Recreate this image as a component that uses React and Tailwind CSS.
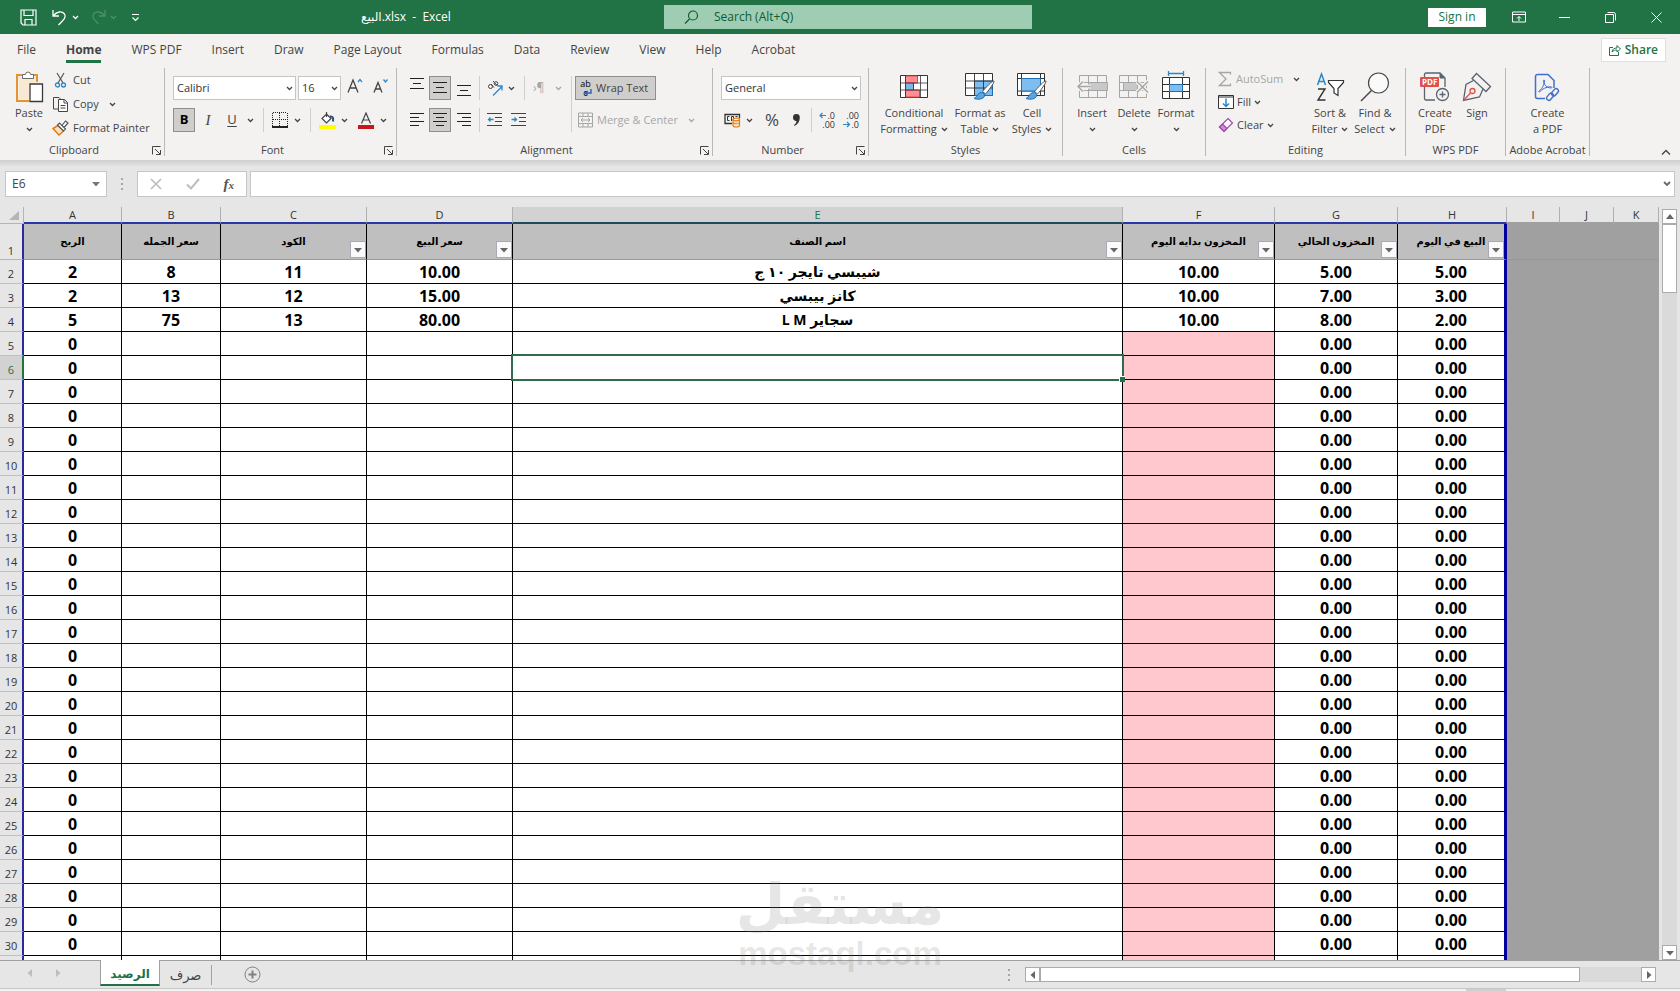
import React from 'react';
import { clsx } from 'clsx';

const COLUMNS = [
  { id: 'A', title: 'الربح', width: 'w-[98px]' },
  { id: 'B', title: 'سعر الجمله', width: 'w-[99px]' },
  { id: 'C', title: 'الكود', width: 'w-[146px]', filter: true },
  { id: 'D', title: 'سعر البيع', width: 'w-[146px]', filter: true },
  { id: 'E', title: 'اسم الصنف', width: '', filter: true },
  { id: 'F', title: 'المخزون بدايه اليوم', width: 'w-[152px]', filter: true },
  { id: 'G', title: 'المخزون الحالي', width: 'w-[123px]', filter: true },
  { id: 'H', title: 'البيع في اليوم', width: 'w-[109px]', filter: true },
];

const EMPTY_COLUMNS = [
  { id: 'I', width: 'w-[53px]' },
  { id: 'J', width: 'w-[54px]' },
  { id: 'K', width: 'w-[45px]' },
];

const ITEMS = [
  ['2', '8', '11', '10.00', 'شيبسي تايجر ١٠ ج', '10.00', '5.00', '5.00'],
  ['2', '13', '12', '15.00', 'كانز بيبسي', '10.00', '7.00', '3.00'],
  ['5', '75', '13', '80.00', 'سجاير L M', '10.00', '8.00', '2.00'],
];

const BLANK = ['0', '', '', '', '', '', '0.00', '0.00'];
const ROWS = Array.from({ length: 29 }, (_, i) => ITEMS[i] || BLANK);

const TABS = ['File', 'Home', 'WPS PDF', 'Insert', 'Draw', 'Page Layout', 'Formulas', 'Data', 'Review', 'View', 'Help', 'Acrobat'];

const Svg = ({ w = 16, h = 16, className, children }) => (
  <svg
    width={w}
    height={h}
    viewBox={`0 0 ${w} ${h}`}
    fill="none"
    stroke="currentColor"
    className={clsx('shrink-0', className)}
    aria-hidden="true"
  >
    {children}
  </svg>
);

const Chevron = ({ className }) => (
  <Svg w={7} h={5} className={className}>
    <path d="M1 1l2.500 2.500L6 1" strokeWidth="1.3" />
  </Svg>
);

const Triangle = ({ dir, className }) => {
  const paths = {
    up: 'M0 6l4-5 4 5z',
    down: 'M0 2l4 4.500 4-4.500z',
    left: 'M6 0v8L1.500 4z',
    right: 'M2 0v8l4.500-4z',
  };
  return (
    <Svg w={8} h={8} className={className}>
      <path d={paths[dir]} fill="currentColor" stroke="none" />
    </Svg>
  );
};

const Sep = ({ className }) => <span className={clsx('w-px shrink-0 bg-[#d0cfce]', className)} />;

/* ---------- Ribbon icons ---------- */

const PasteIcon = () => (
  <Svg w={29} h={32}>
    <path d="M7 4H2v26h12M18 4h4v7" stroke="#e8912d" strokeWidth="2" />
    <path d="M4 6h16v6h-6v16H4z" fill="#fbe3c0" stroke="none" opacity=".6" />
    <path d="M7.500 7.500v-4h3a2.500 2.500 0 015 0h3v4z" fill="#fff" stroke="#6b6b6b" />
    <path d="M15 13h12.500v17.500H15z" fill="#fff" stroke="#3a3a3a" strokeWidth="1.3" />
  </Svg>
);

const CutIcon = () => (
  <Svg w={14} h={16}>
    <path d="M3 1l6 10M10 1L4 11" stroke="#555" strokeWidth="1.2" />
    <circle cx="3.500" cy="13" r="2" stroke="#2b88c8" strokeWidth="1.3" />
    <circle cx="9.500" cy="13" r="2" stroke="#2b88c8" strokeWidth="1.3" />
  </Svg>
);

const CopyIcon = () => (
  <Svg w={17} h={16}>
    <path d="M6 13H1.500V1.500H7l2 2" />
    <path d="M6.500 3.500h6l3 3v9h-9z" fill="#fff" />
    <path d="M12 3.500V7h3.500M8.500 9.500h5M8.500 12h5" />
  </Svg>
);

const PainterIcon = () => (
  <Svg w={17} h={16}>
    <path d="M6 5.500L1 8.500 7 15l4.500-4z" fill="#fbe3c0" stroke="#e07b1a" strokeWidth="1.5" />
    <path d="M5.500 5l6 6 2-2-6-6zM10 5.500l3.500-4.500 2.500 2-4 4.500" fill="#fff" stroke="#555" strokeWidth="1.2" />
  </Svg>
);

const BordersIcon = () => (
  <Svg w={16} h={16}>
    <path d="M1 .5h14M1 7.500h14M.5 1v13M7.500 1v13M15.500 1v13" stroke="#222" strokeDasharray="1 1" />
    <path d="M0 15h16" strokeWidth="2" stroke="#222" />
  </Svg>
);

const FillColorIcon = () => (
  <Svg w={17} h={17}>
    <path d="M7.500 2l4.500 4.500L7.500 11 3 6.500zM7.500 0v5" fill="#fff" stroke="#444" strokeWidth="1.2" />
    <path d="M11 4.500c3-.5 3.500 1.500 3 5" stroke="#2b4f86" strokeWidth="2" />
    <path d="M0 13h17v4H0z" fill="#ffff00" stroke="none" />
  </Svg>
);

const FontColorIcon = () => (
  <Svg w={16} h={17}>
    <path d="M3.500 11.500L8 1l4.500 10.500M5 8h6" stroke="#444" strokeWidth="1.2" />
    <path d="M0 13h16v4H0z" fill="#c8161d" stroke="none" />
  </Svg>
);

const GrowFontIcon = () => (
  <Svg w={16} h={18}>
    <path d="M1 15.500L6 3l5 12.500M2.800 11h6.500" strokeWidth="1.3" />
    <path d="M11 5l2-2.500L15 5" stroke="#2b88c8" strokeWidth="1.3" />
  </Svg>
);

const ShrinkFontIcon = () => (
  <Svg w={16} h={18}>
    <path d="M1 15.500L5 5.500l4 10M2.500 12h5" strokeWidth="1.3" />
    <path d="M10.500 2.500l2 2.500 2-2.500" stroke="#2b88c8" strokeWidth="1.3" />
  </Svg>
);

// lines: list of [x1, x2, y] strokes
const LinesIcon = ({ lines }) => (
  <Svg w={14} h={16} className="text-[#222]">
    {lines.map(([a, b, y]) => (
      <path key={y} d={`M${a} ${y + 0.5}H${b}`} />
    ))}
  </Svg>
);

const IndentIcon = ({ out }) => (
  <Svg w={15} h={16}>
    <path d="M0 1.500h15M8 5.500h7M8 9.500h7M0 13.500h15" />
    {out ? (
      <path d="M6.500 7.500h-5M3.500 5.500l-2 2 2 2" stroke="#2b88c8" strokeWidth="1.3" />
    ) : (
      <path d="M.5 7.500h5M3.500 5.500l2 2-2 2" stroke="#2b88c8" strokeWidth="1.3" />
    )}
  </Svg>
);

const OrientationIcon = () => (
  <Svg w={17} h={17}>
    <circle cx="3.500" cy="6.500" r="2" />
    <path d="M4 4l3 3.500M6 1l4.500 5" />
    <circle cx="9" cy="3.500" r="1.800" />
    <path d="M6 15.500l9-9M10.500 6H15v4.500" stroke="#2b88c8" strokeWidth="1.3" />
  </Svg>
);

const MergeIcon = () => (
  <Svg w={15} h={16} className="text-[#a6a6a6]">
    <path d="M.5 1h14v14H.5zM.5 4.500h14M.5 11.500h14M5 1v3.500M10 1v3.500M5 11.500V15M10 11.500V15M3 8h9M5 6L3 8l2 2M10 6l2 2-2 2" />
  </Svg>
);

const CurrencyIcon = () => (
  <Svg w={17} h={16}>
    <path d="M8 11.500H1v-9h14.500V6" stroke="#333" strokeWidth="1.3" />
    <path d="M5.500 4.500h-2v4h2M7.500 9V4.500h2v2M11.500 4.500h2" stroke="#333" />
    <path d="M9 7.500v6c0 2 6.500 2 6.500 0v-6z" fill="#fbe3c0" stroke="#e07b1a" strokeWidth="1.2" />
    <ellipse cx="12.300" cy="7.500" rx="3.200" ry="1.300" fill="#fff" stroke="#e07b1a" strokeWidth="1.2" />
    <path d="M9 10.500c0 1.500 6.500 1.500 6.500 0" stroke="#e07b1a" />
  </Svg>
);

const DecimalIcon = ({ more }) => (
  <span className="relative flex w-4 flex-col text-right text-[9px] leading-[9px] text-[#333]">
    <span>{more ? '.0' : '.00'}</span>
    <span>{more ? '.00' : '.0'}</span>
    <Svg w={8} h={7} className={clsx('absolute left-0', more ? 'top-px' : 'bottom-px')}>
      <path d={more ? 'M7 3.500H1M3.500 1L1 3.500 3.500 6' : 'M0 3.500h6M4 1l2.500 2.500L4 6'} stroke="#2b88c8" strokeWidth="1.2" />
    </Svg>
  </span>
);

const Brush = () => (
  <>
    <path d="M29 8c1 .8-6 10.500-8.500 13l-3-2.500C20 15.500 27.500 7 29 8z" fill="#fff" stroke="#555" />
    <path d="M16.500 19.500c2 0 3.500 1.500 3 3.500-.8 3-6 4-10.500 2.500 3-1 3.500-6 7.500-6z" fill="#5aa7e0" stroke="#1f6fb5" />
  </>
);

const ConditionalIcon = () => (
  <Svg w={28} h={24}>
    <path d="M.5.5h27v22H.5z" fill="#fff" stroke="#333" />
    <path d="M5.500 1h12v7h-12zM5.500 15h14v7h-14z" fill="#ff8f94" stroke="#e0444c" />
    <path d="M5.500 8h8v7h-8z" fill="#7db7e8" stroke="#e0444c" />
    <path d="M5.500 0v23M13.500 8v7M20.500 0v23M0 8h28M0 15h28" stroke="#333" strokeWidth=".8" />
  </Svg>
);

const FormatTableIcon = () => (
  <Svg w={30} h={28}>
    <path d="M.5.5h27v22H.5z" fill="#fff" stroke="#333" />
    <path d="M9.500 8h18v14.500h-18z" fill="#7dbdf0" stroke="#1f6fb5" />
    <path d="M9.500 0v23M18.500 0v23M0 8h28M0 15h28" stroke="#333" strokeWidth=".9" />
    <Brush />
  </Svg>
);

const CellStylesIcon = () => (
  <Svg w={30} h={28}>
    <path d="M.5.5h27v22H.5zM4.500 0v23M23.500 0v23M0 5.500h28M0 18h28" fill="#fff" stroke="#333" />
    <path d="M4.500 5.500h19V18h-19z" fill="#7dbdf0" stroke="#1f6fb5" />
    <Brush />
  </Svg>
);

const InsertCellsIcon = () => (
  <Svg w={31} h={24} className="text-[#a6a6a6]">
    <path d="M2.500.5h27v22h-27zM11.500.5v22M20.500.5v22M2.500 7.500h27M2.500 15.500h27" />
    <path d="M11.500 7.500h19v8h-19z" fill="#c8c8c8" />
    <path d="M14 11.500H1M6 6.500l-5 5 5 5" stroke="#f3f2f1" strokeWidth="4" />
    <path d="M14 11.500H1M6 6.500l-5 5 5 5" strokeWidth="1.5" />
  </Svg>
);

const DeleteCellsIcon = () => (
  <Svg w={30} h={24} className="text-[#a6a6a6]">
    <path d="M.5.5h27v22H.5zM9.500.5v22M18.500.5v22M.5 7.500h27M.5 15.500h27" />
    <path d="M4.500 7.500h14v8h-14z" fill="#c8c8c8" />
    <path d="M18 6.500l11 11M29 6.500l-11 11" stroke="#f3f2f1" strokeWidth="4" />
    <path d="M18 6.500l11 11M29 6.500l-11 11" strokeWidth="1.5" />
  </Svg>
);

const FormatCellsIcon = () => (
  <Svg w={28} h={29}>
    <path d="M6.500 2.500h15M6.500 0v5M21.500 0v5" stroke="#2b88c8" strokeWidth="1.3" />
    <path d="M.5 6.500h27v21H.5z" fill="#fff" stroke="#333" />
    <path d="M7.500 6.500v21M20.500 6.500v21M.5 13.500h27M.5 20.500h27" stroke="#333" />
    <path d="M7.500 13.500h13v7h-13z" fill="#7dbdf0" stroke="#1f6fb5" />
  </Svg>
);

const SigmaIcon = () => (
  <Svg w={14} h={16} className="text-[#a6a6a6]">
    <path d="M12.500 3.500V1.500H1.500L8 8l-6.500 6.500h11v-2" strokeWidth="1.3" />
  </Svg>
);

const FillIcon = () => (
  <Svg w={16} h={14}>
    <path d="M.5.5h15v13H.5z" fill="#fff" stroke="#333" />
    <path d="M.5 2h15" stroke="#333" />
    <path d="M8 3.500v8M5 8.500l3 3 3-3" stroke="#2b88c8" strokeWidth="1.5" />
  </Svg>
);

const EraserIcon = () => (
  <Svg w={16} h={16}>
    <path d="M10 1.500l4.500 4.500L6 14.500 1.500 10z" fill="#fff" stroke="#a347ad" strokeWidth="1.2" />
    <path d="M4.500 7L9 11.500l-3 3L1.500 10z" fill="#d08bd8" stroke="#a347ad" strokeWidth="1.2" />
  </Svg>
);

const SortIcon = () => (
  <Svg w={29} h={30}>
    <path d="M1.500 13L5.500 2l4 11M3 9.500h5" stroke="#2b88c8" strokeWidth="1.5" />
    <path d="M2 17h7L2 28h7.500" stroke="#333" strokeWidth="1.4" />
    <path d="M12.500 8.500h15v2l-5.500 6v7l-4-2.500v-4.500l-5.500-6z" fill="#fff" stroke="#333" strokeWidth="1.2" />
  </Svg>
);

const FindIcon = () => (
  <Svg w={30} h={30}>
    <circle cx="18.500" cy="11" r="10" fill="#fafafa" stroke="#444" strokeWidth="1.2" />
    <path d="M11.500 18.500L1 29" stroke="#444" strokeWidth="1.4" />
  </Svg>
);

const CreatePdfIcon = () => (
  <Svg w={30} h={30}>
    <path d="M4.500 5V2.500a1.500 1.500 0 011.500-1.500H20l5 5v9M4.500 15v11.500A1.500 1.500 0 006 28h9" stroke="#5b6270" strokeWidth="1.3" />
    <path d="M20 1v5h5z" fill="#5b6270" stroke="#5b6270" />
    <rect x="0" y="5" width="19" height="10" rx="1" fill="#e0504c" stroke="none" />
    <text x="2" y="13" fill="#fff" stroke="none" className="font-['Open_Sans',sans-serif] text-[8px] font-bold">PDF</text>
    <circle cx="22.500" cy="22.500" r="6" fill="#f3f2f1" stroke="#5b6270" strokeWidth="1.3" />
    <path d="M19.500 22.500h6M22.500 19.500v6" stroke="#5b6270" strokeWidth="1.3" />
  </Svg>
);

const SignIcon = () => (
  <Svg w={30} h={30}>
    <path d="M11.500 8.500L4 12.500 1.500 28.500l16-3.500 3.500-8" fill="#f3f2f1" stroke="#5b6270" strokeWidth="1.3" />
    <path d="M14.500 1.500l14 13-4.500 5L10 6.500z" fill="#f3f2f1" stroke="#5b6270" strokeWidth="1.3" />
    <path d="M2 28l6.500-7" stroke="#e0504c" strokeWidth="1.3" />
    <circle cx="10.500" cy="19" r="2.500" stroke="#e0504c" strokeWidth="1.3" />
  </Svg>
);

const AdobeIcon = () => (
  <Svg w={27} h={30} className="text-[#3f6fd0]">
    <path d="M11 26.500H3.500a2 2 0 01-2-2v-20a2 2 0 012-2H14l6 6V16" strokeWidth="1.5" />
    <path d="M5 19c2-1 5-5 5.500-10 .3-1.500-1.500-1.500-1 .5 1 4 3 6 7.500 6.500 1.500 0 1-1.500-.5-1.300C12 15 8 17 6 19.500c-.8.8-1.800.2-1-.5z" />
    <rect x="12" y="22.500" width="8" height="4.500" rx="2.200" transform="rotate(-50 16 24.700)" strokeWidth="1.4" />
    <rect x="17" y="18" width="8" height="4.500" rx="2.200" transform="rotate(-50 21 20.200)" strokeWidth="1.4" />
  </Svg>
);

/* ---------- Ribbon parts ---------- */

const Group = ({ title, launcher, className, children }) => (
  <section className={clsx('flex h-[88px] shrink-0 flex-col border-r border-[#b8b7b6]', className)} aria-label={title}>
    <div className="flex h-[78px]">{children}</div>
    <div className={clsx('relative flex h-3 items-center justify-center leading-3 whitespace-nowrap', launcher && 'pr-4')}>
      {title}
      {launcher && (
        <button type="button" aria-label={`${title} settings`} className="absolute right-[3px] bottom-px">
          <Svg w={9} h={9}>
            <path d="M8.500.5h-8v8M3 3l5 5M8.500 4v4.500H4" />
          </Svg>
        </button>
      )}
    </div>
  </section>
);

const BigButton = ({ icon, lines, chevron, className }) => (
  <button type="button" className={clsx('flex shrink-0 flex-col items-center leading-4 whitespace-nowrap', className)}>
    <span className="flex h-[37px] items-center">{icon}</span>
    {lines.map((line, i) => (
      <span key={line} className="flex h-4 items-center gap-1">
        {line}
        {chevron === 'inline' && i === lines.length - 1 && <Chevron />}
      </span>
    ))}
    {chevron === 'below' && (
      <span className="flex h-4 items-center">
        <Chevron />
      </span>
    )}
  </button>
);

const IconButton = ({ label, active, className, children }) => (
  <button
    type="button"
    aria-label={label}
    className={clsx(
      'flex h-6 shrink-0 items-center justify-center',
      active && 'border border-[#8f8e8d] bg-[#cfcecd]',
      className
    )}
  >
    {children}
  </button>
);

const Combo = ({ label, value, className }) => (
  <span className={clsx('relative flex h-6 shrink-0', className)}>
    <select
      aria-label={label}
      defaultValue={value}
      className="w-full appearance-none border border-[#c6c5c4] bg-white pl-[3px] text-[11px] text-[#333] outline-none"
    >
      <option>{value}</option>
    </select>
    <Chevron className="pointer-events-none absolute top-[10px] right-[3px]" />
  </span>
);

const TitleBar = () => (
  <header className="flex h-[34px] shrink-0 items-center bg-[#217346] px-4 text-white">
    <div className="flex flex-1 items-center">
      <button type="button" aria-label="Save" className="ml-1">
        <Svg w={17} h={17}>
          <path d="M1 1h15v15H3l-2-2zM4 1v5.500h9V1M5 16v-5.500h7V16" strokeWidth="1.2" />
        </Svg>
      </button>
      <button type="button" aria-label="Undo" className="ml-[14px] flex items-center gap-1">
        <Svg w={17} h={17}>
          <path d="M2 1v6h6M2 7c4-5 9-5 11.500-2 2 3 0 5-6 11" strokeWidth="1.3" />
        </Svg>
        <Chevron />
      </button>
      <button type="button" aria-label="Redo" disabled className="ml-3 flex items-center gap-1 text-[#4c8f6b]">
        <Svg w={15} h={17}>
          <path d="M14 1v6H8M14 7C10 2 5 2 2.500 5c-2 3 0 5 5 10" strokeWidth="1.3" />
        </Svg>
        <Chevron />
      </button>
      <button type="button" aria-label="Customize Quick Access Toolbar" className="ml-[14px]">
        <Svg w={9} h={9}>
          <path d="M1 1.500h7M1.500 4.500l3 3 3-3" strokeWidth="1.2" />
        </Svg>
      </button>
      <h1 className="ml-[221px] text-[12px] whitespace-pre">البيع.xlsx  -  Excel</h1>
    </div>
    <label className="ml-4 flex h-6 w-[368px] items-center bg-[#9fcdb3] pl-5 text-[#0e5c2f]">
      <Svg w={15} h={15}>
        <circle cx="9" cy="5.500" r="4.500" strokeWidth="1.2" />
        <path d="M5.500 9L1 13.500" strokeWidth="1.2" />
      </Svg>
      <input
        type="text"
        aria-label="Search"
        placeholder="Search (Alt+Q)"
        className="ml-[15px] flex-1 bg-transparent text-[12px] outline-none placeholder:text-[#0e5c2f]"
      />
    </label>
    <div className="flex flex-1 items-center justify-end">
      <button type="button" className="mr-[26px] h-[19px] w-[58px] bg-white text-[12px] leading-4 text-[#217346]">
        Sign in
      </button>
      <button type="button" aria-label="Ribbon display options" className="mr-[33px]">
        <Svg w={14} h={12}>
          <path d="M.5 1h13v10H.5zM.5 3.500h13M7 10V5.500M5 7.500l2-2 2 2" />
        </Svg>
      </button>
      <button type="button" aria-label="Minimize" className="mr-[35px]">
        <Svg w={11} h={11}>
          <path d="M0 5.500h11" />
        </Svg>
      </button>
      <button type="button" aria-label="Restore" className="mr-[35px]">
        <Svg w={11} h={11}>
          <path d="M.5 2.500h8v8h-8zM2.500.5h6a2 2 0 012 2v6" />
        </Svg>
      </button>
      <button type="button" aria-label="Close" className="mr-[2px]">
        <Svg w={11} h={11}>
          <path d="M.5.5l10 10M10.500.5l-10 10" />
        </Svg>
      </button>
    </div>
  </header>
);

const RibbonTabs = () => (
  <nav className="flex h-[34px] items-center justify-between pr-[14px] pl-[17px] text-[12px]">
    <div className="flex gap-[30px]">
      {TABS.map((tab) => (
        <button
          key={tab}
          type="button"
          className={clsx(
            'flex h-6 items-center border-b-3 whitespace-nowrap',
            tab === 'Home' ? 'border-[#217346] font-bold' : 'border-transparent'
          )}
        >
          {tab}
        </button>
      ))}
    </div>
    <button
      type="button"
      className="mb-[2px] flex h-6 items-center gap-1 border border-[#e1dfdd] bg-white px-[7px] text-[12px] font-semibold text-[#217346]"
    >
      <Svg w={12} h={12}>
        <path d="M4 3.500H.5v8h9V8M3 8c.5-3 2-4 5-4V1.500L11.500 5 8 8V6C6 6 4.500 6.500 3 8z" />
      </Svg>
      Share
    </button>
  </nav>
);

const Ribbon = () => (
  <div className="flex pb-1 text-[11px]">
    <Group title="Clipboard" launcher className="w-[165px]">
      <BigButton className="ml-[13px] w-8" icon={<PasteIcon />} lines={['Paste']} chevron="below" />
      <div className="ml-[7px] flex flex-col gap-2">
        <button type="button" className="mt-1 flex h-4 items-center gap-1">
          <span className="flex w-[17px] justify-center"><CutIcon /></span>
          Cut
        </button>
        <button type="button" className="flex h-4 items-center gap-1">
          <CopyIcon />
          Copy
          <Chevron className="ml-[6px]" />
        </button>
        <button type="button" className="flex h-4 items-center gap-1 whitespace-nowrap">
          <PainterIcon />
          Format Painter
        </button>
      </div>
    </Group>

    <Group title="Font" launcher className="w-[232px]">
      <div className="flex flex-col gap-2 pt-2 pl-2">
        <div className="flex gap-[2px]">
          <Combo label="Font" value="Calibri" className="w-[123px]" />
          <Combo label="Font size" value="16" className="w-[43px]" />
          <IconButton label="Increase font size" className="w-6 pb-1"><GrowFontIcon /></IconButton>
          <IconButton label="Decrease font size" className="w-6 pb-1"><ShrinkFontIcon /></IconButton>
        </div>
        <div className="flex items-center">
          <IconButton label="Bold" active className="w-[22px] text-[13px] font-bold text-black">B</IconButton>
          <IconButton label="Italic" className="w-[26px] font-['Liberation_Serif',serif] text-[15px] italic">I</IconButton>
          <IconButton label="Underline" className="w-[22px] text-[13px] underline underline-offset-2">U</IconButton>
          <Chevron className="ml-1" />
          <Sep className="mr-2 ml-[9px] h-6" />
          <BordersIcon />
          <Chevron className="ml-[6px]" />
          <Sep className="mr-2 ml-[9px] h-6" />
          <FillColorIcon />
          <Chevron className="mr-[10px] ml-[5px]" />
          <FontColorIcon />
          <Chevron className="ml-[6px]" />
        </div>
      </div>
    </Group>

    <Group title="Alignment" launcher className="w-[316px]">
      <div className="flex w-[174px] flex-col gap-2 pt-2 pl-2">
        <div className="flex items-center">
          <IconButton label="Top align" className="w-6 pb-2"><LinesIcon lines={[[0, 14, 2], [3, 11, 7], [0, 14, 12]]} /></IconButton>
          <IconButton label="Middle align" active className="w-[22px]"><LinesIcon lines={[[0, 14, 2], [3, 11, 7], [0, 14, 12]]} /></IconButton>
          <IconButton label="Bottom align" className="w-[26px] pt-1"><LinesIcon lines={[[0, 14, 3], [3, 11, 8], [0, 14, 13]]} /></IconButton>
          <Sep className="mr-[7px] ml-[2px] h-6" />
          <OrientationIcon />
          <Chevron className="ml-1" />
          <Sep className="mr-2 ml-[9px] h-6" />
          <span className="w-4 text-[12px] leading-4 whitespace-nowrap text-[#a6a6a6]">›¶</span>
          <Chevron className="ml-[6px] text-[#a6a6a6]" />
        </div>
        <div className="flex items-center">
          <IconButton label="Align left" className="w-6"><LinesIcon lines={[[0, 14, 1], [0, 9, 5], [0, 14, 9], [0, 9, 13]]} /></IconButton>
          <IconButton label="Center" active className="w-[22px]"><LinesIcon lines={[[0, 14, 1], [3, 11, 5], [0, 14, 9], [3, 11, 13]]} /></IconButton>
          <IconButton label="Align right" className="w-[26px]"><LinesIcon lines={[[0, 14, 1], [5, 14, 5], [0, 14, 9], [5, 14, 13]]} /></IconButton>
          <Sep className="mr-[7px] ml-[2px] h-6" />
          <IndentIcon out />
          <span className="w-[9px]" />
          <IndentIcon />
        </div>
      </div>
      <Sep className="mt-2 h-14" />
      <div className="flex flex-col gap-2 pt-2 pl-[3px]">
        <button type="button" className="flex h-6 w-[81px] items-center gap-1 border border-[#8f8e8d] bg-[#cfcecd] pl-[3px] whitespace-nowrap">
          <span className="relative flex w-[13px] flex-col text-[9px] leading-[9px] text-black">
            <span>ab</span>
            <span>c</span>
            <Svg w={8} h={8} className="absolute right-0 bottom-0">
              <path d="M7 0v4H1.500M3.500 2l-2 2 2 2" stroke="#2564ad" strokeWidth="1.4" />
            </Svg>
          </span>
          Wrap Text
        </button>
        <button type="button" disabled className="flex h-6 items-center gap-1 pl-[3px] whitespace-nowrap text-[#a6a6a6]">
          <MergeIcon />
          Merge &amp; Center
          <Chevron className="ml-[6px]" />
        </button>
      </div>
    </Group>

    <Group title="Number" launcher className="w-[156px]">
      <div className="flex flex-col gap-2 pt-2 pl-2">
        <Combo label="Number format" value="General" className="w-[140px]" />
        <div className="flex items-center pl-[3px]">
          <CurrencyIcon />
          <Chevron className="ml-[5px]" />
          <IconButton label="Percent" className="ml-2 w-[22px] text-[17px]">%</IconButton>
          <IconButton label="Comma style" className="ml-[2px] w-[22px]">
            <Svg w={9} h={13}>
              <path d="M1 3.500a3.300 3.300 0 016.800 0c0 4-2 7-5.300 8.500l-.5-1c1.500-1 2.500-2.500 2.500-4A3.200 3.200 0 011 3.500z" fill="#333" stroke="none" />
            </Svg>
          </IconButton>
          <Sep className="mr-[7px] ml-1 h-6" />
          <DecimalIcon more />
          <span className="w-2" />
          <DecimalIcon />
        </div>
      </div>
    </Group>

    <Group title="Styles" className="w-[194px]">
      <BigButton className="ml-2 w-[74px]" icon={<ConditionalIcon />} lines={['Conditional', 'Formatting']} chevron="inline" />
      <BigButton className="w-[58px]" icon={<FormatTableIcon />} lines={['Format as', 'Table']} chevron="inline" />
      <BigButton className="w-[46px]" icon={<CellStylesIcon />} lines={['Cell', 'Styles']} chevron="inline" />
    </Group>

    <Group title="Cells" className="w-[143px]">
      <BigButton className="ml-2 w-[42px]" icon={<InsertCellsIcon />} lines={['Insert']} chevron="below" />
      <BigButton className="w-[42px]" icon={<DeleteCellsIcon />} lines={['Delete']} chevron="below" />
      <BigButton className="w-[42px]" icon={<span className="pb-[3px]"><FormatCellsIcon /></span>} lines={['Format']} chevron="below" />
    </Group>

    <Group title="Editing" className="w-[200px]">
      <div className="flex w-[96px] flex-col gap-[7px] pt-[3px] pl-3">
        <button type="button" disabled className="flex h-4 items-center gap-1 text-[#a6a6a6]">
          <SigmaIcon />
          AutoSum
          <Chevron className="ml-[6px] text-[#444]" />
        </button>
        <button type="button" className="flex h-4 items-center gap-[3px]"><FillIcon />Fill<Chevron /></button>
        <button type="button" className="flex h-4 items-center gap-[3px]"><EraserIcon />Clear<Chevron /></button>
      </div>
      <BigButton className="ml-[7px] w-[42px]" icon={<SortIcon />} lines={['Sort &', 'Filter']} chevron="inline" />
      <BigButton className="ml-[2px] w-[44px]" icon={<FindIcon />} lines={['Find &', 'Select']} chevron="inline" />
    </Group>

    <Group title="WPS PDF" className="w-[100px]">
      <BigButton className="ml-2 w-[42px]" icon={<CreatePdfIcon />} lines={['Create', 'PDF']} />
      <BigButton className="w-[42px]" icon={<SignIcon />} lines={['Sign']} />
    </Group>

    <Group title="Adobe Acrobat" className="w-[84px]">
      <BigButton className="w-full" icon={<AdobeIcon />} lines={['Create', 'a PDF']} />
    </Group>

    <button type="button" aria-label="Collapse the ribbon" className="mr-[9px] ml-auto self-end">
      <Svg w={10} h={7}>
        <path d="M1 5.500l4-4 4 4" strokeWidth="1.3" />
      </Svg>
    </button>
  </div>
);

const FormulaBar = () => (
  <div className="flex h-[47px] shrink-0 bg-linear-to-b from-[#cfcfcf] to-[#e6e6e6] to-15% pt-[11px] pr-[5px] pl-[5px] text-[11px]">
    <label className="relative flex h-[26px] w-[102px] items-center border border-[#c6c6c6] bg-white">
      <input type="text" aria-label="Name box" defaultValue="E6" className="w-full pl-[6px] text-[12px] text-[#444] outline-none" />
      <Triangle dir="down" className="absolute right-[6px] text-[#777]" />
    </label>
    <span className="mx-[14px] flex h-[26px] w-[2px] flex-col items-center justify-center gap-[3px]">
      <i className="size-[2px] bg-[#a6a6a6]" />
      <i className="size-[2px] bg-[#a6a6a6]" />
      <i className="size-[2px] bg-[#a6a6a6]" />
    </span>
    <div className="flex h-[26px] w-[110px] items-center justify-between border border-[#c6c6c6] bg-white px-3 text-[#bdbdbd]">
      <button type="button" aria-label="Cancel">
        <Svg w={12} h={12}><path d="M1 1l10 10M11 1L1 11" strokeWidth="1.6" /></Svg>
      </button>
      <button type="button" aria-label="Enter">
        <Svg w={14} h={12}><path d="M1 6.500l4 4L13 1" strokeWidth="2" /></Svg>
      </button>
      <button type="button" aria-label="Insert function" className="font-['Liberation_Serif',serif] text-[15px] leading-4 font-bold text-[#555] italic">
        f<span className="text-[11px]">x</span>
      </button>
    </div>
    <label className="relative ml-[3px] flex h-[26px] flex-1 items-center border border-[#c6c6c6] bg-white">
      <input type="text" aria-label="Formula" className="w-full px-2 outline-none" />
      <Svg w={8} h={6} className="absolute right-[3px] text-[#666]"><path d="M1 1l3 3 3-3" strokeWidth="1.8" /></Svg>
    </label>
  </div>
);

const HeaderCell = ({ column }) => (
  <td
    className={clsx(
      'relative border-b border-b-[#999] bg-[#bfbfbf] p-0 text-center text-[10px] font-bold text-black',
      column.id === 'H' ? 'border-r-3 border-r-[#00009c]' : 'border-r border-r-black'
    )}
  >
    <span className="block whitespace-nowrap" dir="rtl">{column.title}</span>
    {column.filter && (
      <button
        type="button"
        aria-label={`Filter ${column.id}`}
        className="absolute right-0 bottom-px flex h-[17px] w-4 items-center justify-center border border-[#a9a9b8] bg-[#fafafd] text-[#666]"
      >
        <Triangle dir="down" />
      </button>
    )}
  </td>
);

const edge = (id) => (id === 'H' ? 'border-r-3 border-r-[#00009c]' : 'border-r border-r-black');

const Sheet = () => (
  <table className="w-full table-fixed border-separate border-spacing-0 text-black">
    <colgroup>
      <col className="w-6" />
      {COLUMNS.map((c) => <col key={c.id} className={c.width} />)}
      {EMPTY_COLUMNS.map((c) => <col key={c.id} className={c.width} />)}
    </colgroup>
    <thead>
      <tr className="h-[17px] text-[11px] leading-[14px]">
        <th className="border-r border-b border-[#b5b5b5] bg-[#e6e6e6] p-0">
          <Svg w={10} h={9} className="mr-1 ml-auto"><path d="M10 0v9H0z" fill="#b5b5b5" stroke="none" /></Svg>
        </th>
        {[...COLUMNS, ...EMPTY_COLUMNS].map((c, i) => (
          <th
            key={c.id}
            scope="col"
            className={clsx(
              'border-r border-b-2 border-r-[#b0b0b0] p-0 font-normal',
              c.id === 'E' ? 'border-b-[#1d4a5c] bg-[#d2d2d2] text-[#217346]' : 'bg-[#e6e6e6] text-[#333]',
              c.id !== 'E' && (i < COLUMNS.length ? 'border-b-[#2a35a8]' : 'border-b-[#a0a0a0]')
            )}
          >
            {c.id}
          </th>
        ))}
      </tr>
    </thead>
    <tbody>
      <tr className="h-9">
        <th scope="row" className="border-r-2 border-b border-r-[#2a2a9c] border-b-[#b5b5b5] bg-[#e6e6e6] p-0 align-bottom text-[11px] leading-4 font-normal text-[#333]">1</th>
        {COLUMNS.map((c) => <HeaderCell key={c.id} column={c} />)}
        <td colSpan={3} className="border-b border-[#979797] bg-[#a0a0a0]" />
      </tr>
      {ROWS.map((row, r) => {
        const number = r + 2;
        const selectedRow = number === 6;
        return (
          <tr key={number} className="h-6">
            <th
              scope="row"
              className={clsx(
                'border-r-2 border-b border-b-[#c0c0c0] p-0 align-bottom text-[11px] leading-[18px] font-normal',
                selectedRow ? 'border-r-[#217346] bg-[#d2d2d2] text-[#217346]' : 'border-r-[#2a2a9c] bg-[#e6e6e6] text-[#333]'
              )}
            >
              {number}
            </th>
            {row.map((value, i) => {
              const { id } = COLUMNS[i];
              const selected = selectedRow && id === 'E';
              return (
                <td
                  key={id}
                  className={clsx(
                    'relative border-b border-b-black p-0 text-center text-[16px] leading-5 font-bold',
                    edge(id),
                    id === 'F' && !value ? 'bg-[#ffc7ce]' : 'bg-white'
                  )}
                >
                  {id === 'E' && value ? <span dir="rtl" className="block text-[14px]">{value}</span> : value}
                  {selected && (
                    <span className="absolute -inset-x-[2px] -top-[2px] -bottom-[2px] z-10 border-2 border-[#2f6b4c]">
                      <i className="absolute -right-[3px] -bottom-[3px] size-[6px] border-t border-l border-white bg-[#217346]" />
                    </span>
                  )}
                </td>
              );
            })}
            {r === 0 && <td colSpan={3} rowSpan={ROWS.length + 1} className="bg-[#a0a0a0]" />}
          </tr>
        );
      })}
      <tr className="h-6">
        <th className="border-r-2 border-r-[#2a2a9c] bg-[#e6e6e6] p-0" />
        {COLUMNS.map(({ id }) => (
          <td key={id} className={clsx('p-0', edge(id), id === 'F' ? 'bg-[#ffc7ce]' : 'bg-white')} />
        ))}
      </tr>
    </tbody>
  </table>
);

const ScrollButton = ({ dir }) => (
  <button
    type="button"
    aria-label={`Scroll ${dir}`}
    className="flex size-[15px] shrink-0 items-center justify-center border border-[#ababab] bg-white text-[#666]"
  >
    <Triangle dir={dir} />
  </button>
);

const SheetBar = () => (
  <footer className="flex h-[31px] shrink-0 flex-col bg-[#e6e6e6]">
    <div className="flex h-7 items-start border-t border-[#a0a0a0] pr-6">
      <div className="flex h-6 items-center gap-5 pr-[38px] pl-[26px] text-[#bdbdbd]">
        <button type="button" aria-label="Previous sheet"><Triangle dir="left" /></button>
        <button type="button" aria-label="Next sheet"><Triangle dir="right" /></button>
      </div>
      <button type="button" className="-mt-px h-[26px] w-[60px] border-x border-b-2 border-x-[#a0a0a0] border-b-[#217346] bg-white pt-[3px] text-[12px] leading-5 font-bold text-[#217346]">
        الرصيد
      </button>
      <button type="button" className="mt-1 h-5 w-[52px] border-r border-[#a0a0a0] text-[13px] leading-4 text-[#444]">صرف</button>
      <button type="button" aria-label="New sheet" className="mt-[5px] ml-8 text-[#808080]">
        <Svg w={17} h={17}>
          <circle cx="8.500" cy="8.500" r="7.500" />
          <path d="M8.500 4.500v8M4.500 8.500h8" strokeWidth="2" />
        </Svg>
      </button>
      <span className="mt-2 mr-[15px] ml-auto flex flex-col gap-[3px]">
        <i className="size-[2px] bg-[#a6a6a6]" />
        <i className="size-[2px] bg-[#a6a6a6]" />
        <i className="size-[2px] bg-[#a6a6a6]" />
      </span>
      <div className="mt-[6px] flex w-[631px] bg-[#dadada]">
        <ScrollButton dir="left" />
        <span className="h-[15px] flex-1 border border-[#ababab] bg-white" />
        <span className="w-[61px]" />
        <ScrollButton dir="right" />
      </div>
    </div>
    <div className="flex h-[3px] justify-end border-t border-[#c6c6c6] bg-[#f3f2f1] pr-[174px]">
      <span className="h-full w-10 bg-[#cfcfcf]" />
    </div>
  </footer>
);

const Watermark = () => (
  <div className="pointer-events-none absolute bottom-[19px] left-1/2 z-20 flex -translate-x-1/2 flex-col items-center font-bold whitespace-nowrap text-[#808080]/20">
    <span className="font-['DejaVu_Sans',sans-serif] text-[57px] leading-[64px]">مستقل</span>
    <span className="font-['Liberation_Sans',sans-serif] text-[33px] leading-9">mostaql.com</span>
  </div>
);

export default function App() {
  return (
    <div className="relative flex h-screen flex-col overflow-hidden bg-[#e6e6e6] font-['Open_Sans','DejaVu_Sans',sans-serif] text-[#444]">
      <TitleBar />
      <div className="shrink-0 bg-[#f3f2f1]">
        <RibbonTabs />
        <Ribbon />
      </div>
      <FormulaBar />
      <main className="flex min-h-0 flex-1">
        <div className="min-w-0 flex-1 overflow-hidden">
          <Sheet />
        </div>
        <div className="mt-[2px] mr-[3px] ml-[3px] flex w-[15px] flex-col bg-[#dadada]">
          <ScrollButton dir="up" />
          <span className="h-[69px] border border-[#ababab] bg-white" />
          <span className="flex-1" />
          <ScrollButton dir="down" />
        </div>
      </main>
      <SheetBar />
      <Watermark />
    </div>
  );
}
